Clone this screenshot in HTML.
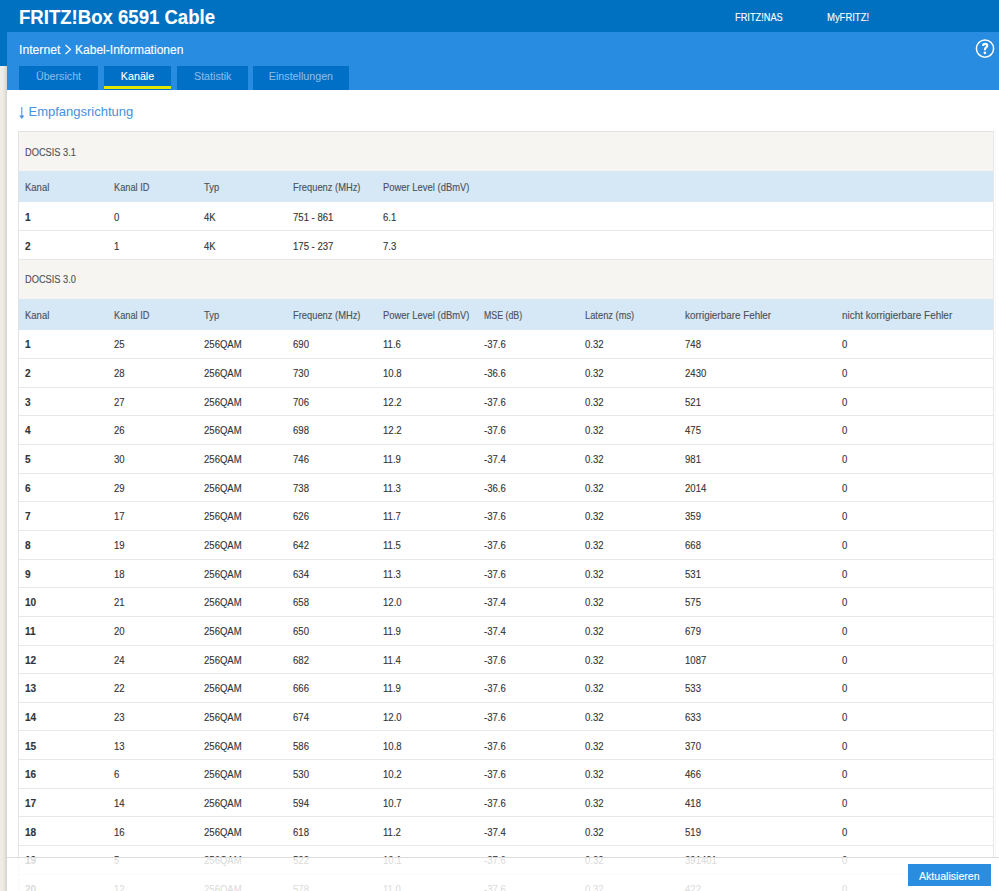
<!DOCTYPE html>
<html><head><meta charset="utf-8"><style>
html,body{margin:0;padding:0;}
body{width:999px;height:891px;overflow:hidden;position:relative;background:#efebe4;font-family:"Liberation Sans", sans-serif;}
body>div{position:absolute;}
.t{white-space:nowrap;transform-origin:0 0;-webkit-text-stroke:0.12px currentColor;}
</style></head><body>
<div style="left:0px;top:66px;width:7px;height:825px;background:linear-gradient(to right,#f0ede6 0px,#f0ede6 2px,#edeae3 3px,#e9e6df 4px,#e3e0d9 5px,#dad8d2 6px,#d6d4cf 7px);"></div>
<div style="left:0px;top:0px;width:999px;height:66px;background:#0070c0;"></div>
<div style="left:7px;top:32px;width:992px;height:58px;background:#288ce1;"></div>
<div style="left:7px;top:90px;width:992px;height:801px;background:#fff;"></div>
<div class="t" style="left:19px;top:5.95px;font-size:21px;line-height:21px;color:#fff;font-weight:bold;transform:scaleX(0.884);">FRITZ!Box 6591 Cable</div>
<div class="t" style="left:734.5px;top:11.65px;font-size:11px;line-height:11px;color:#fff;font-weight:normal;transform:scaleX(0.84);">FRITZ!NAS</div>
<div class="t" style="left:826.5px;top:11.65px;font-size:11px;line-height:11px;color:#fff;font-weight:normal;transform:scaleX(0.86);">MyFRITZ!</div>
<div class="t" style="left:19px;top:43.05px;font-size:13px;line-height:13px;color:#fff;font-weight:normal;transform:scaleX(0.938);">Internet</div>
<div class="t" style="left:75px;top:43.05px;font-size:13px;line-height:13px;color:#fff;font-weight:normal;transform:scaleX(0.926);">Kabel-Informationen</div>
<svg style="position:absolute;left:64px;top:44px" width="9" height="12" viewBox="0 0 9 12"><path d="M1.5 1 L6.5 5.5 L1.5 10" fill="none" stroke="#fff" stroke-width="1.2"/></svg>
<svg style="position:absolute;left:974px;top:38px" width="22" height="22" viewBox="0 0 22 22"><circle cx="11" cy="10.55" r="8.6" fill="none" stroke="#fff" stroke-width="1.5"/><path d="M9.1 8.1 C9.1 6.6 10.0 5.9 11.2 5.9 C12.4 5.9 13.3 6.7 13.3 7.8 C13.3 9.3 11.0 9.6 11.0 11.3 L11.0 12.2" fill="none" stroke="#fff" stroke-width="2.1"/><circle cx="10.9" cy="14.8" r="1.35" fill="#fff"/></svg>
<div style="left:19px;top:66px;width:79px;height:24px;background:#006fc6;"></div>
<div class="t" style="left:19px;top:71.15px;width:79.00px;text-align:center;font-size:11.5px;line-height:11px;color:#86bbe8;transform:scaleX(0.93);transform-origin:50% 0">Übersicht</div>
<div style="left:104px;top:66px;width:67px;height:24px;background:#006fc6;"></div>
<div style="left:104px;top:86px;width:67px;height:3px;background:#e5e600;"></div>
<div class="t" style="left:104px;top:71.15px;width:67.00px;text-align:center;font-size:11.5px;line-height:11px;color:#fff;transform:scaleX(0.93);transform-origin:50% 0">Kanäle</div>
<div style="left:176.5px;top:66px;width:71.5px;height:24px;background:#006fc6;"></div>
<div class="t" style="left:176.5px;top:71.15px;width:71.50px;text-align:center;font-size:11.5px;line-height:11px;color:#86bbe8;transform:scaleX(0.93);transform-origin:50% 0">Statistik</div>
<div style="left:253.4px;top:66px;width:95.9px;height:24px;background:#006fc6;"></div>
<div class="t" style="left:253.4px;top:71.15px;width:95.90px;text-align:center;font-size:11.5px;line-height:11px;color:#86bbe8;transform:scaleX(0.93);transform-origin:50% 0">Einstellungen</div>
<svg style="position:absolute;left:16px;top:104px" width="12" height="17" viewBox="16 104 12 17"><rect x="21.3" y="107" width="1.05" height="9.5" fill="#4a92e1"/><path d="M19.2 115.4 L24.4 115.4 L21.8 119 Z" fill="#4a92e1"/></svg>
<div class="t" style="left:28.5px;top:105.05px;font-size:13px;line-height:13px;color:#4a92e1;font-weight:normal;transform:scaleX(1.0);-webkit-text-stroke:0.05px currentColor;">Empfangsrichtung</div>
<div style="left:18px;top:132px;width:975px;height:39px;background:#f6f5f2;"></div>
<div class="t" style="left:24.6px;top:147.27px;font-size:10.5px;line-height:10.5px;color:#4c5157;font-weight:normal;transform:scaleX(0.882);">DOCSIS 3.1</div>
<div style="left:18px;top:171px;width:975px;height:31px;background:#d6e7f5;"></div>
<div class="t" style="left:24.6px;top:182.07px;font-size:10.5px;line-height:10.5px;color:#4c5157;font-weight:normal;transform:scaleX(0.905);">Kanal</div>
<div class="t" style="left:114.4px;top:182.07px;font-size:10.5px;line-height:10.5px;color:#4c5157;font-weight:normal;transform:scaleX(0.878);">Kanal ID</div>
<div class="t" style="left:203.6px;top:182.07px;font-size:10.5px;line-height:10.5px;color:#4c5157;font-weight:normal;transform:scaleX(0.9);">Typ</div>
<div class="t" style="left:293.3px;top:182.07px;font-size:10.5px;line-height:10.5px;color:#4c5157;font-weight:normal;transform:scaleX(0.889);">Frequenz (MHz)</div>
<div class="t" style="left:383px;top:182.07px;font-size:10.5px;line-height:10.5px;color:#4c5157;font-weight:normal;transform:scaleX(0.898);">Power Level (dBmV)</div>
<div style="left:18px;top:230px;width:975px;height:1px;background:#e8e8e8;"></div>
<div class="t" style="left:24.6px;top:211.97px;font-size:10.5px;line-height:10.5px;color:#343434;font-weight:bold;transform:scaleX(0.96);">1</div>
<div class="t" style="left:114.4px;top:211.97px;font-size:10.5px;line-height:10.5px;color:#343434;font-weight:normal;transform:scaleX(0.91);">0</div>
<div class="t" style="left:203.6px;top:211.97px;font-size:10.5px;line-height:10.5px;color:#343434;font-weight:normal;transform:scaleX(0.9);">4K</div>
<div class="t" style="left:293.3px;top:211.97px;font-size:10.5px;line-height:10.5px;color:#343434;font-weight:normal;transform:scaleX(0.91);">751 - 861</div>
<div class="t" style="left:383px;top:211.97px;font-size:10.5px;line-height:10.5px;color:#343434;font-weight:normal;transform:scaleX(0.91);">6.1</div>
<div style="left:18px;top:259px;width:975px;height:1px;background:#e8e8e8;"></div>
<div class="t" style="left:24.6px;top:240.62px;font-size:10.5px;line-height:10.5px;color:#343434;font-weight:bold;transform:scaleX(0.96);">2</div>
<div class="t" style="left:114.4px;top:240.62px;font-size:10.5px;line-height:10.5px;color:#343434;font-weight:normal;transform:scaleX(0.91);">1</div>
<div class="t" style="left:203.6px;top:240.62px;font-size:10.5px;line-height:10.5px;color:#343434;font-weight:normal;transform:scaleX(0.9);">4K</div>
<div class="t" style="left:293.3px;top:240.62px;font-size:10.5px;line-height:10.5px;color:#343434;font-weight:normal;transform:scaleX(0.91);">175 - 237</div>
<div class="t" style="left:383px;top:240.62px;font-size:10.5px;line-height:10.5px;color:#343434;font-weight:normal;transform:scaleX(0.91);">7.3</div>
<div style="left:18px;top:260px;width:975px;height:39px;background:#f6f5f2;"></div>
<div class="t" style="left:24.6px;top:274.47px;font-size:10.5px;line-height:10.5px;color:#4c5157;font-weight:normal;transform:scaleX(0.882);">DOCSIS 3.0</div>
<div style="left:18px;top:299px;width:975px;height:31px;background:#d6e7f5;"></div>
<div class="t" style="left:24.6px;top:309.88px;font-size:10.5px;line-height:10.5px;color:#4c5157;font-weight:normal;transform:scaleX(0.905);">Kanal</div>
<div class="t" style="left:114.4px;top:309.88px;font-size:10.5px;line-height:10.5px;color:#4c5157;font-weight:normal;transform:scaleX(0.878);">Kanal ID</div>
<div class="t" style="left:203.6px;top:309.88px;font-size:10.5px;line-height:10.5px;color:#4c5157;font-weight:normal;transform:scaleX(0.9);">Typ</div>
<div class="t" style="left:293.3px;top:309.88px;font-size:10.5px;line-height:10.5px;color:#4c5157;font-weight:normal;transform:scaleX(0.889);">Frequenz (MHz)</div>
<div class="t" style="left:383px;top:309.88px;font-size:10.5px;line-height:10.5px;color:#4c5157;font-weight:normal;transform:scaleX(0.898);">Power Level (dBmV)</div>
<div class="t" style="left:483.8px;top:309.88px;font-size:10.5px;line-height:10.5px;color:#4c5157;font-weight:normal;transform:scaleX(0.838);">MSE (dB)</div>
<div class="t" style="left:584.8px;top:309.88px;font-size:10.5px;line-height:10.5px;color:#4c5157;font-weight:normal;transform:scaleX(0.888);">Latenz (ms)</div>
<div class="t" style="left:685.3px;top:309.88px;font-size:10.5px;line-height:10.5px;color:#4c5157;font-weight:normal;transform:scaleX(0.94);">korrigierbare Fehler</div>
<div class="t" style="left:842.3px;top:309.88px;font-size:10.5px;line-height:10.5px;color:#4c5157;font-weight:normal;transform:scaleX(0.944);">nicht korrigierbare Fehler</div>
<div style="left:18px;top:358px;width:975px;height:1px;background:#e8e8e8;"></div>
<div class="t" style="left:24.6px;top:339.47px;font-size:10.5px;line-height:10.5px;color:#343434;font-weight:bold;transform:scaleX(0.96);">1</div>
<div class="t" style="left:114.4px;top:339.47px;font-size:10.5px;line-height:10.5px;color:#343434;font-weight:normal;transform:scaleX(0.91);">25</div>
<div class="t" style="left:203.6px;top:339.47px;font-size:10.5px;line-height:10.5px;color:#343434;font-weight:normal;transform:scaleX(0.91);">256QAM</div>
<div class="t" style="left:293.3px;top:339.47px;font-size:10.5px;line-height:10.5px;color:#343434;font-weight:normal;transform:scaleX(0.91);">690</div>
<div class="t" style="left:383px;top:339.47px;font-size:10.5px;line-height:10.5px;color:#343434;font-weight:normal;transform:scaleX(0.91);">11.6</div>
<div class="t" style="left:483.8px;top:339.47px;font-size:10.5px;line-height:10.5px;color:#343434;font-weight:normal;transform:scaleX(0.91);">-37.6</div>
<div class="t" style="left:584.8px;top:339.47px;font-size:10.5px;line-height:10.5px;color:#343434;font-weight:normal;transform:scaleX(0.91);">0.32</div>
<div class="t" style="left:685.3px;top:339.47px;font-size:10.5px;line-height:10.5px;color:#343434;font-weight:normal;transform:scaleX(0.91);">748</div>
<div class="t" style="left:842.3px;top:339.47px;font-size:10.5px;line-height:10.5px;color:#343434;font-weight:normal;transform:scaleX(0.91);">0</div>
<div style="left:18px;top:387px;width:975px;height:1px;background:#e8e8e8;"></div>
<div class="t" style="left:24.6px;top:368.12px;font-size:10.5px;line-height:10.5px;color:#343434;font-weight:bold;transform:scaleX(0.96);">2</div>
<div class="t" style="left:114.4px;top:368.12px;font-size:10.5px;line-height:10.5px;color:#343434;font-weight:normal;transform:scaleX(0.91);">28</div>
<div class="t" style="left:203.6px;top:368.12px;font-size:10.5px;line-height:10.5px;color:#343434;font-weight:normal;transform:scaleX(0.91);">256QAM</div>
<div class="t" style="left:293.3px;top:368.12px;font-size:10.5px;line-height:10.5px;color:#343434;font-weight:normal;transform:scaleX(0.91);">730</div>
<div class="t" style="left:383px;top:368.12px;font-size:10.5px;line-height:10.5px;color:#343434;font-weight:normal;transform:scaleX(0.91);">10.8</div>
<div class="t" style="left:483.8px;top:368.12px;font-size:10.5px;line-height:10.5px;color:#343434;font-weight:normal;transform:scaleX(0.91);">-36.6</div>
<div class="t" style="left:584.8px;top:368.12px;font-size:10.5px;line-height:10.5px;color:#343434;font-weight:normal;transform:scaleX(0.91);">0.32</div>
<div class="t" style="left:685.3px;top:368.12px;font-size:10.5px;line-height:10.5px;color:#343434;font-weight:normal;transform:scaleX(0.91);">2430</div>
<div class="t" style="left:842.3px;top:368.12px;font-size:10.5px;line-height:10.5px;color:#343434;font-weight:normal;transform:scaleX(0.91);">0</div>
<div style="left:18px;top:415px;width:975px;height:1px;background:#e8e8e8;"></div>
<div class="t" style="left:24.6px;top:396.77px;font-size:10.5px;line-height:10.5px;color:#343434;font-weight:bold;transform:scaleX(0.96);">3</div>
<div class="t" style="left:114.4px;top:396.77px;font-size:10.5px;line-height:10.5px;color:#343434;font-weight:normal;transform:scaleX(0.91);">27</div>
<div class="t" style="left:203.6px;top:396.77px;font-size:10.5px;line-height:10.5px;color:#343434;font-weight:normal;transform:scaleX(0.91);">256QAM</div>
<div class="t" style="left:293.3px;top:396.77px;font-size:10.5px;line-height:10.5px;color:#343434;font-weight:normal;transform:scaleX(0.91);">706</div>
<div class="t" style="left:383px;top:396.77px;font-size:10.5px;line-height:10.5px;color:#343434;font-weight:normal;transform:scaleX(0.91);">12.2</div>
<div class="t" style="left:483.8px;top:396.77px;font-size:10.5px;line-height:10.5px;color:#343434;font-weight:normal;transform:scaleX(0.91);">-37.6</div>
<div class="t" style="left:584.8px;top:396.77px;font-size:10.5px;line-height:10.5px;color:#343434;font-weight:normal;transform:scaleX(0.91);">0.32</div>
<div class="t" style="left:685.3px;top:396.77px;font-size:10.5px;line-height:10.5px;color:#343434;font-weight:normal;transform:scaleX(0.91);">521</div>
<div class="t" style="left:842.3px;top:396.77px;font-size:10.5px;line-height:10.5px;color:#343434;font-weight:normal;transform:scaleX(0.91);">0</div>
<div style="left:18px;top:444px;width:975px;height:1px;background:#e8e8e8;"></div>
<div class="t" style="left:24.6px;top:425.42px;font-size:10.5px;line-height:10.5px;color:#343434;font-weight:bold;transform:scaleX(0.96);">4</div>
<div class="t" style="left:114.4px;top:425.42px;font-size:10.5px;line-height:10.5px;color:#343434;font-weight:normal;transform:scaleX(0.91);">26</div>
<div class="t" style="left:203.6px;top:425.42px;font-size:10.5px;line-height:10.5px;color:#343434;font-weight:normal;transform:scaleX(0.91);">256QAM</div>
<div class="t" style="left:293.3px;top:425.42px;font-size:10.5px;line-height:10.5px;color:#343434;font-weight:normal;transform:scaleX(0.91);">698</div>
<div class="t" style="left:383px;top:425.42px;font-size:10.5px;line-height:10.5px;color:#343434;font-weight:normal;transform:scaleX(0.91);">12.2</div>
<div class="t" style="left:483.8px;top:425.42px;font-size:10.5px;line-height:10.5px;color:#343434;font-weight:normal;transform:scaleX(0.91);">-37.6</div>
<div class="t" style="left:584.8px;top:425.42px;font-size:10.5px;line-height:10.5px;color:#343434;font-weight:normal;transform:scaleX(0.91);">0.32</div>
<div class="t" style="left:685.3px;top:425.42px;font-size:10.5px;line-height:10.5px;color:#343434;font-weight:normal;transform:scaleX(0.91);">475</div>
<div class="t" style="left:842.3px;top:425.42px;font-size:10.5px;line-height:10.5px;color:#343434;font-weight:normal;transform:scaleX(0.91);">0</div>
<div style="left:18px;top:473px;width:975px;height:1px;background:#e8e8e8;"></div>
<div class="t" style="left:24.6px;top:454.07px;font-size:10.5px;line-height:10.5px;color:#343434;font-weight:bold;transform:scaleX(0.96);">5</div>
<div class="t" style="left:114.4px;top:454.07px;font-size:10.5px;line-height:10.5px;color:#343434;font-weight:normal;transform:scaleX(0.91);">30</div>
<div class="t" style="left:203.6px;top:454.07px;font-size:10.5px;line-height:10.5px;color:#343434;font-weight:normal;transform:scaleX(0.91);">256QAM</div>
<div class="t" style="left:293.3px;top:454.07px;font-size:10.5px;line-height:10.5px;color:#343434;font-weight:normal;transform:scaleX(0.91);">746</div>
<div class="t" style="left:383px;top:454.07px;font-size:10.5px;line-height:10.5px;color:#343434;font-weight:normal;transform:scaleX(0.91);">11.9</div>
<div class="t" style="left:483.8px;top:454.07px;font-size:10.5px;line-height:10.5px;color:#343434;font-weight:normal;transform:scaleX(0.91);">-37.4</div>
<div class="t" style="left:584.8px;top:454.07px;font-size:10.5px;line-height:10.5px;color:#343434;font-weight:normal;transform:scaleX(0.91);">0.32</div>
<div class="t" style="left:685.3px;top:454.07px;font-size:10.5px;line-height:10.5px;color:#343434;font-weight:normal;transform:scaleX(0.91);">981</div>
<div class="t" style="left:842.3px;top:454.07px;font-size:10.5px;line-height:10.5px;color:#343434;font-weight:normal;transform:scaleX(0.91);">0</div>
<div style="left:18px;top:501px;width:975px;height:1px;background:#e8e8e8;"></div>
<div class="t" style="left:24.6px;top:482.72px;font-size:10.5px;line-height:10.5px;color:#343434;font-weight:bold;transform:scaleX(0.96);">6</div>
<div class="t" style="left:114.4px;top:482.72px;font-size:10.5px;line-height:10.5px;color:#343434;font-weight:normal;transform:scaleX(0.91);">29</div>
<div class="t" style="left:203.6px;top:482.72px;font-size:10.5px;line-height:10.5px;color:#343434;font-weight:normal;transform:scaleX(0.91);">256QAM</div>
<div class="t" style="left:293.3px;top:482.72px;font-size:10.5px;line-height:10.5px;color:#343434;font-weight:normal;transform:scaleX(0.91);">738</div>
<div class="t" style="left:383px;top:482.72px;font-size:10.5px;line-height:10.5px;color:#343434;font-weight:normal;transform:scaleX(0.91);">11.3</div>
<div class="t" style="left:483.8px;top:482.72px;font-size:10.5px;line-height:10.5px;color:#343434;font-weight:normal;transform:scaleX(0.91);">-36.6</div>
<div class="t" style="left:584.8px;top:482.72px;font-size:10.5px;line-height:10.5px;color:#343434;font-weight:normal;transform:scaleX(0.91);">0.32</div>
<div class="t" style="left:685.3px;top:482.72px;font-size:10.5px;line-height:10.5px;color:#343434;font-weight:normal;transform:scaleX(0.91);">2014</div>
<div class="t" style="left:842.3px;top:482.72px;font-size:10.5px;line-height:10.5px;color:#343434;font-weight:normal;transform:scaleX(0.91);">0</div>
<div style="left:18px;top:530px;width:975px;height:1px;background:#e8e8e8;"></div>
<div class="t" style="left:24.6px;top:511.37px;font-size:10.5px;line-height:10.5px;color:#343434;font-weight:bold;transform:scaleX(0.96);">7</div>
<div class="t" style="left:114.4px;top:511.37px;font-size:10.5px;line-height:10.5px;color:#343434;font-weight:normal;transform:scaleX(0.91);">17</div>
<div class="t" style="left:203.6px;top:511.37px;font-size:10.5px;line-height:10.5px;color:#343434;font-weight:normal;transform:scaleX(0.91);">256QAM</div>
<div class="t" style="left:293.3px;top:511.37px;font-size:10.5px;line-height:10.5px;color:#343434;font-weight:normal;transform:scaleX(0.91);">626</div>
<div class="t" style="left:383px;top:511.37px;font-size:10.5px;line-height:10.5px;color:#343434;font-weight:normal;transform:scaleX(0.91);">11.7</div>
<div class="t" style="left:483.8px;top:511.37px;font-size:10.5px;line-height:10.5px;color:#343434;font-weight:normal;transform:scaleX(0.91);">-37.6</div>
<div class="t" style="left:584.8px;top:511.37px;font-size:10.5px;line-height:10.5px;color:#343434;font-weight:normal;transform:scaleX(0.91);">0.32</div>
<div class="t" style="left:685.3px;top:511.37px;font-size:10.5px;line-height:10.5px;color:#343434;font-weight:normal;transform:scaleX(0.91);">359</div>
<div class="t" style="left:842.3px;top:511.37px;font-size:10.5px;line-height:10.5px;color:#343434;font-weight:normal;transform:scaleX(0.91);">0</div>
<div style="left:18px;top:559px;width:975px;height:1px;background:#e8e8e8;"></div>
<div class="t" style="left:24.6px;top:540.02px;font-size:10.5px;line-height:10.5px;color:#343434;font-weight:bold;transform:scaleX(0.96);">8</div>
<div class="t" style="left:114.4px;top:540.02px;font-size:10.5px;line-height:10.5px;color:#343434;font-weight:normal;transform:scaleX(0.91);">19</div>
<div class="t" style="left:203.6px;top:540.02px;font-size:10.5px;line-height:10.5px;color:#343434;font-weight:normal;transform:scaleX(0.91);">256QAM</div>
<div class="t" style="left:293.3px;top:540.02px;font-size:10.5px;line-height:10.5px;color:#343434;font-weight:normal;transform:scaleX(0.91);">642</div>
<div class="t" style="left:383px;top:540.02px;font-size:10.5px;line-height:10.5px;color:#343434;font-weight:normal;transform:scaleX(0.91);">11.5</div>
<div class="t" style="left:483.8px;top:540.02px;font-size:10.5px;line-height:10.5px;color:#343434;font-weight:normal;transform:scaleX(0.91);">-37.6</div>
<div class="t" style="left:584.8px;top:540.02px;font-size:10.5px;line-height:10.5px;color:#343434;font-weight:normal;transform:scaleX(0.91);">0.32</div>
<div class="t" style="left:685.3px;top:540.02px;font-size:10.5px;line-height:10.5px;color:#343434;font-weight:normal;transform:scaleX(0.91);">668</div>
<div class="t" style="left:842.3px;top:540.02px;font-size:10.5px;line-height:10.5px;color:#343434;font-weight:normal;transform:scaleX(0.91);">0</div>
<div style="left:18px;top:587px;width:975px;height:1px;background:#e8e8e8;"></div>
<div class="t" style="left:24.6px;top:568.68px;font-size:10.5px;line-height:10.5px;color:#343434;font-weight:bold;transform:scaleX(0.96);">9</div>
<div class="t" style="left:114.4px;top:568.68px;font-size:10.5px;line-height:10.5px;color:#343434;font-weight:normal;transform:scaleX(0.91);">18</div>
<div class="t" style="left:203.6px;top:568.68px;font-size:10.5px;line-height:10.5px;color:#343434;font-weight:normal;transform:scaleX(0.91);">256QAM</div>
<div class="t" style="left:293.3px;top:568.68px;font-size:10.5px;line-height:10.5px;color:#343434;font-weight:normal;transform:scaleX(0.91);">634</div>
<div class="t" style="left:383px;top:568.68px;font-size:10.5px;line-height:10.5px;color:#343434;font-weight:normal;transform:scaleX(0.91);">11.3</div>
<div class="t" style="left:483.8px;top:568.68px;font-size:10.5px;line-height:10.5px;color:#343434;font-weight:normal;transform:scaleX(0.91);">-37.6</div>
<div class="t" style="left:584.8px;top:568.68px;font-size:10.5px;line-height:10.5px;color:#343434;font-weight:normal;transform:scaleX(0.91);">0.32</div>
<div class="t" style="left:685.3px;top:568.68px;font-size:10.5px;line-height:10.5px;color:#343434;font-weight:normal;transform:scaleX(0.91);">531</div>
<div class="t" style="left:842.3px;top:568.68px;font-size:10.5px;line-height:10.5px;color:#343434;font-weight:normal;transform:scaleX(0.91);">0</div>
<div style="left:18px;top:616px;width:975px;height:1px;background:#e8e8e8;"></div>
<div class="t" style="left:24.6px;top:597.32px;font-size:10.5px;line-height:10.5px;color:#343434;font-weight:bold;transform:scaleX(0.96);">10</div>
<div class="t" style="left:114.4px;top:597.32px;font-size:10.5px;line-height:10.5px;color:#343434;font-weight:normal;transform:scaleX(0.91);">21</div>
<div class="t" style="left:203.6px;top:597.32px;font-size:10.5px;line-height:10.5px;color:#343434;font-weight:normal;transform:scaleX(0.91);">256QAM</div>
<div class="t" style="left:293.3px;top:597.32px;font-size:10.5px;line-height:10.5px;color:#343434;font-weight:normal;transform:scaleX(0.91);">658</div>
<div class="t" style="left:383px;top:597.32px;font-size:10.5px;line-height:10.5px;color:#343434;font-weight:normal;transform:scaleX(0.91);">12.0</div>
<div class="t" style="left:483.8px;top:597.32px;font-size:10.5px;line-height:10.5px;color:#343434;font-weight:normal;transform:scaleX(0.91);">-37.4</div>
<div class="t" style="left:584.8px;top:597.32px;font-size:10.5px;line-height:10.5px;color:#343434;font-weight:normal;transform:scaleX(0.91);">0.32</div>
<div class="t" style="left:685.3px;top:597.32px;font-size:10.5px;line-height:10.5px;color:#343434;font-weight:normal;transform:scaleX(0.91);">575</div>
<div class="t" style="left:842.3px;top:597.32px;font-size:10.5px;line-height:10.5px;color:#343434;font-weight:normal;transform:scaleX(0.91);">0</div>
<div style="left:18px;top:645px;width:975px;height:1px;background:#e8e8e8;"></div>
<div class="t" style="left:24.6px;top:625.98px;font-size:10.5px;line-height:10.5px;color:#343434;font-weight:bold;transform:scaleX(0.96);">11</div>
<div class="t" style="left:114.4px;top:625.98px;font-size:10.5px;line-height:10.5px;color:#343434;font-weight:normal;transform:scaleX(0.91);">20</div>
<div class="t" style="left:203.6px;top:625.98px;font-size:10.5px;line-height:10.5px;color:#343434;font-weight:normal;transform:scaleX(0.91);">256QAM</div>
<div class="t" style="left:293.3px;top:625.98px;font-size:10.5px;line-height:10.5px;color:#343434;font-weight:normal;transform:scaleX(0.91);">650</div>
<div class="t" style="left:383px;top:625.98px;font-size:10.5px;line-height:10.5px;color:#343434;font-weight:normal;transform:scaleX(0.91);">11.9</div>
<div class="t" style="left:483.8px;top:625.98px;font-size:10.5px;line-height:10.5px;color:#343434;font-weight:normal;transform:scaleX(0.91);">-37.4</div>
<div class="t" style="left:584.8px;top:625.98px;font-size:10.5px;line-height:10.5px;color:#343434;font-weight:normal;transform:scaleX(0.91);">0.32</div>
<div class="t" style="left:685.3px;top:625.98px;font-size:10.5px;line-height:10.5px;color:#343434;font-weight:normal;transform:scaleX(0.91);">679</div>
<div class="t" style="left:842.3px;top:625.98px;font-size:10.5px;line-height:10.5px;color:#343434;font-weight:normal;transform:scaleX(0.91);">0</div>
<div style="left:18px;top:673px;width:975px;height:1px;background:#e8e8e8;"></div>
<div class="t" style="left:24.6px;top:654.62px;font-size:10.5px;line-height:10.5px;color:#343434;font-weight:bold;transform:scaleX(0.96);">12</div>
<div class="t" style="left:114.4px;top:654.62px;font-size:10.5px;line-height:10.5px;color:#343434;font-weight:normal;transform:scaleX(0.91);">24</div>
<div class="t" style="left:203.6px;top:654.62px;font-size:10.5px;line-height:10.5px;color:#343434;font-weight:normal;transform:scaleX(0.91);">256QAM</div>
<div class="t" style="left:293.3px;top:654.62px;font-size:10.5px;line-height:10.5px;color:#343434;font-weight:normal;transform:scaleX(0.91);">682</div>
<div class="t" style="left:383px;top:654.62px;font-size:10.5px;line-height:10.5px;color:#343434;font-weight:normal;transform:scaleX(0.91);">11.4</div>
<div class="t" style="left:483.8px;top:654.62px;font-size:10.5px;line-height:10.5px;color:#343434;font-weight:normal;transform:scaleX(0.91);">-37.6</div>
<div class="t" style="left:584.8px;top:654.62px;font-size:10.5px;line-height:10.5px;color:#343434;font-weight:normal;transform:scaleX(0.91);">0.32</div>
<div class="t" style="left:685.3px;top:654.62px;font-size:10.5px;line-height:10.5px;color:#343434;font-weight:normal;transform:scaleX(0.91);">1087</div>
<div class="t" style="left:842.3px;top:654.62px;font-size:10.5px;line-height:10.5px;color:#343434;font-weight:normal;transform:scaleX(0.91);">0</div>
<div style="left:18px;top:702px;width:975px;height:1px;background:#e8e8e8;"></div>
<div class="t" style="left:24.6px;top:683.27px;font-size:10.5px;line-height:10.5px;color:#343434;font-weight:bold;transform:scaleX(0.96);">13</div>
<div class="t" style="left:114.4px;top:683.27px;font-size:10.5px;line-height:10.5px;color:#343434;font-weight:normal;transform:scaleX(0.91);">22</div>
<div class="t" style="left:203.6px;top:683.27px;font-size:10.5px;line-height:10.5px;color:#343434;font-weight:normal;transform:scaleX(0.91);">256QAM</div>
<div class="t" style="left:293.3px;top:683.27px;font-size:10.5px;line-height:10.5px;color:#343434;font-weight:normal;transform:scaleX(0.91);">666</div>
<div class="t" style="left:383px;top:683.27px;font-size:10.5px;line-height:10.5px;color:#343434;font-weight:normal;transform:scaleX(0.91);">11.9</div>
<div class="t" style="left:483.8px;top:683.27px;font-size:10.5px;line-height:10.5px;color:#343434;font-weight:normal;transform:scaleX(0.91);">-37.6</div>
<div class="t" style="left:584.8px;top:683.27px;font-size:10.5px;line-height:10.5px;color:#343434;font-weight:normal;transform:scaleX(0.91);">0.32</div>
<div class="t" style="left:685.3px;top:683.27px;font-size:10.5px;line-height:10.5px;color:#343434;font-weight:normal;transform:scaleX(0.91);">533</div>
<div class="t" style="left:842.3px;top:683.27px;font-size:10.5px;line-height:10.5px;color:#343434;font-weight:normal;transform:scaleX(0.91);">0</div>
<div style="left:18px;top:730px;width:975px;height:1px;background:#e8e8e8;"></div>
<div class="t" style="left:24.6px;top:711.93px;font-size:10.5px;line-height:10.5px;color:#343434;font-weight:bold;transform:scaleX(0.96);">14</div>
<div class="t" style="left:114.4px;top:711.93px;font-size:10.5px;line-height:10.5px;color:#343434;font-weight:normal;transform:scaleX(0.91);">23</div>
<div class="t" style="left:203.6px;top:711.93px;font-size:10.5px;line-height:10.5px;color:#343434;font-weight:normal;transform:scaleX(0.91);">256QAM</div>
<div class="t" style="left:293.3px;top:711.93px;font-size:10.5px;line-height:10.5px;color:#343434;font-weight:normal;transform:scaleX(0.91);">674</div>
<div class="t" style="left:383px;top:711.93px;font-size:10.5px;line-height:10.5px;color:#343434;font-weight:normal;transform:scaleX(0.91);">12.0</div>
<div class="t" style="left:483.8px;top:711.93px;font-size:10.5px;line-height:10.5px;color:#343434;font-weight:normal;transform:scaleX(0.91);">-37.6</div>
<div class="t" style="left:584.8px;top:711.93px;font-size:10.5px;line-height:10.5px;color:#343434;font-weight:normal;transform:scaleX(0.91);">0.32</div>
<div class="t" style="left:685.3px;top:711.93px;font-size:10.5px;line-height:10.5px;color:#343434;font-weight:normal;transform:scaleX(0.91);">633</div>
<div class="t" style="left:842.3px;top:711.93px;font-size:10.5px;line-height:10.5px;color:#343434;font-weight:normal;transform:scaleX(0.91);">0</div>
<div style="left:18px;top:759px;width:975px;height:1px;background:#e8e8e8;"></div>
<div class="t" style="left:24.6px;top:740.57px;font-size:10.5px;line-height:10.5px;color:#343434;font-weight:bold;transform:scaleX(0.96);">15</div>
<div class="t" style="left:114.4px;top:740.57px;font-size:10.5px;line-height:10.5px;color:#343434;font-weight:normal;transform:scaleX(0.91);">13</div>
<div class="t" style="left:203.6px;top:740.57px;font-size:10.5px;line-height:10.5px;color:#343434;font-weight:normal;transform:scaleX(0.91);">256QAM</div>
<div class="t" style="left:293.3px;top:740.57px;font-size:10.5px;line-height:10.5px;color:#343434;font-weight:normal;transform:scaleX(0.91);">586</div>
<div class="t" style="left:383px;top:740.57px;font-size:10.5px;line-height:10.5px;color:#343434;font-weight:normal;transform:scaleX(0.91);">10.8</div>
<div class="t" style="left:483.8px;top:740.57px;font-size:10.5px;line-height:10.5px;color:#343434;font-weight:normal;transform:scaleX(0.91);">-37.6</div>
<div class="t" style="left:584.8px;top:740.57px;font-size:10.5px;line-height:10.5px;color:#343434;font-weight:normal;transform:scaleX(0.91);">0.32</div>
<div class="t" style="left:685.3px;top:740.57px;font-size:10.5px;line-height:10.5px;color:#343434;font-weight:normal;transform:scaleX(0.91);">370</div>
<div class="t" style="left:842.3px;top:740.57px;font-size:10.5px;line-height:10.5px;color:#343434;font-weight:normal;transform:scaleX(0.91);">0</div>
<div style="left:18px;top:788px;width:975px;height:1px;background:#e8e8e8;"></div>
<div class="t" style="left:24.6px;top:769.23px;font-size:10.5px;line-height:10.5px;color:#343434;font-weight:bold;transform:scaleX(0.96);">16</div>
<div class="t" style="left:114.4px;top:769.23px;font-size:10.5px;line-height:10.5px;color:#343434;font-weight:normal;transform:scaleX(0.91);">6</div>
<div class="t" style="left:203.6px;top:769.23px;font-size:10.5px;line-height:10.5px;color:#343434;font-weight:normal;transform:scaleX(0.91);">256QAM</div>
<div class="t" style="left:293.3px;top:769.23px;font-size:10.5px;line-height:10.5px;color:#343434;font-weight:normal;transform:scaleX(0.91);">530</div>
<div class="t" style="left:383px;top:769.23px;font-size:10.5px;line-height:10.5px;color:#343434;font-weight:normal;transform:scaleX(0.91);">10.2</div>
<div class="t" style="left:483.8px;top:769.23px;font-size:10.5px;line-height:10.5px;color:#343434;font-weight:normal;transform:scaleX(0.91);">-37.6</div>
<div class="t" style="left:584.8px;top:769.23px;font-size:10.5px;line-height:10.5px;color:#343434;font-weight:normal;transform:scaleX(0.91);">0.32</div>
<div class="t" style="left:685.3px;top:769.23px;font-size:10.5px;line-height:10.5px;color:#343434;font-weight:normal;transform:scaleX(0.91);">466</div>
<div class="t" style="left:842.3px;top:769.23px;font-size:10.5px;line-height:10.5px;color:#343434;font-weight:normal;transform:scaleX(0.91);">0</div>
<div style="left:18px;top:816px;width:975px;height:1px;background:#e8e8e8;"></div>
<div class="t" style="left:24.6px;top:797.88px;font-size:10.5px;line-height:10.5px;color:#343434;font-weight:bold;transform:scaleX(0.96);">17</div>
<div class="t" style="left:114.4px;top:797.88px;font-size:10.5px;line-height:10.5px;color:#343434;font-weight:normal;transform:scaleX(0.91);">14</div>
<div class="t" style="left:203.6px;top:797.88px;font-size:10.5px;line-height:10.5px;color:#343434;font-weight:normal;transform:scaleX(0.91);">256QAM</div>
<div class="t" style="left:293.3px;top:797.88px;font-size:10.5px;line-height:10.5px;color:#343434;font-weight:normal;transform:scaleX(0.91);">594</div>
<div class="t" style="left:383px;top:797.88px;font-size:10.5px;line-height:10.5px;color:#343434;font-weight:normal;transform:scaleX(0.91);">10.7</div>
<div class="t" style="left:483.8px;top:797.88px;font-size:10.5px;line-height:10.5px;color:#343434;font-weight:normal;transform:scaleX(0.91);">-37.6</div>
<div class="t" style="left:584.8px;top:797.88px;font-size:10.5px;line-height:10.5px;color:#343434;font-weight:normal;transform:scaleX(0.91);">0.32</div>
<div class="t" style="left:685.3px;top:797.88px;font-size:10.5px;line-height:10.5px;color:#343434;font-weight:normal;transform:scaleX(0.91);">418</div>
<div class="t" style="left:842.3px;top:797.88px;font-size:10.5px;line-height:10.5px;color:#343434;font-weight:normal;transform:scaleX(0.91);">0</div>
<div style="left:18px;top:845px;width:975px;height:1px;background:#e8e8e8;"></div>
<div class="t" style="left:24.6px;top:826.52px;font-size:10.5px;line-height:10.5px;color:#343434;font-weight:bold;transform:scaleX(0.96);">18</div>
<div class="t" style="left:114.4px;top:826.52px;font-size:10.5px;line-height:10.5px;color:#343434;font-weight:normal;transform:scaleX(0.91);">16</div>
<div class="t" style="left:203.6px;top:826.52px;font-size:10.5px;line-height:10.5px;color:#343434;font-weight:normal;transform:scaleX(0.91);">256QAM</div>
<div class="t" style="left:293.3px;top:826.52px;font-size:10.5px;line-height:10.5px;color:#343434;font-weight:normal;transform:scaleX(0.91);">618</div>
<div class="t" style="left:383px;top:826.52px;font-size:10.5px;line-height:10.5px;color:#343434;font-weight:normal;transform:scaleX(0.91);">11.2</div>
<div class="t" style="left:483.8px;top:826.52px;font-size:10.5px;line-height:10.5px;color:#343434;font-weight:normal;transform:scaleX(0.91);">-37.4</div>
<div class="t" style="left:584.8px;top:826.52px;font-size:10.5px;line-height:10.5px;color:#343434;font-weight:normal;transform:scaleX(0.91);">0.32</div>
<div class="t" style="left:685.3px;top:826.52px;font-size:10.5px;line-height:10.5px;color:#343434;font-weight:normal;transform:scaleX(0.91);">519</div>
<div class="t" style="left:842.3px;top:826.52px;font-size:10.5px;line-height:10.5px;color:#343434;font-weight:normal;transform:scaleX(0.91);">0</div>
<div style="left:18px;top:874px;width:975px;height:1px;background:#e8e8e8;"></div>
<div class="t" style="left:24.6px;top:855.17px;font-size:10.5px;line-height:10.5px;color:#343434;font-weight:bold;transform:scaleX(0.96);">19</div>
<div class="t" style="left:114.4px;top:855.17px;font-size:10.5px;line-height:10.5px;color:#343434;font-weight:normal;transform:scaleX(0.91);">5</div>
<div class="t" style="left:203.6px;top:855.17px;font-size:10.5px;line-height:10.5px;color:#343434;font-weight:normal;transform:scaleX(0.91);">256QAM</div>
<div class="t" style="left:293.3px;top:855.17px;font-size:10.5px;line-height:10.5px;color:#343434;font-weight:normal;transform:scaleX(0.91);">522</div>
<div class="t" style="left:383px;top:855.17px;font-size:10.5px;line-height:10.5px;color:#343434;font-weight:normal;transform:scaleX(0.91);">10.1</div>
<div class="t" style="left:483.8px;top:855.17px;font-size:10.5px;line-height:10.5px;color:#343434;font-weight:normal;transform:scaleX(0.91);">-37.6</div>
<div class="t" style="left:584.8px;top:855.17px;font-size:10.5px;line-height:10.5px;color:#343434;font-weight:normal;transform:scaleX(0.91);">0.32</div>
<div class="t" style="left:685.3px;top:855.17px;font-size:10.5px;line-height:10.5px;color:#343434;font-weight:normal;transform:scaleX(0.91);">391401</div>
<div class="t" style="left:842.3px;top:855.17px;font-size:10.5px;line-height:10.5px;color:#343434;font-weight:normal;transform:scaleX(0.91);">0</div>
<div style="left:18px;top:902px;width:975px;height:1px;background:#e8e8e8;"></div>
<div class="t" style="left:24.6px;top:883.83px;font-size:10.5px;line-height:10.5px;color:#343434;font-weight:bold;transform:scaleX(0.96);">20</div>
<div class="t" style="left:114.4px;top:883.83px;font-size:10.5px;line-height:10.5px;color:#343434;font-weight:normal;transform:scaleX(0.91);">12</div>
<div class="t" style="left:203.6px;top:883.83px;font-size:10.5px;line-height:10.5px;color:#343434;font-weight:normal;transform:scaleX(0.91);">256QAM</div>
<div class="t" style="left:293.3px;top:883.83px;font-size:10.5px;line-height:10.5px;color:#343434;font-weight:normal;transform:scaleX(0.91);">578</div>
<div class="t" style="left:383px;top:883.83px;font-size:10.5px;line-height:10.5px;color:#343434;font-weight:normal;transform:scaleX(0.91);">11.0</div>
<div class="t" style="left:483.8px;top:883.83px;font-size:10.5px;line-height:10.5px;color:#343434;font-weight:normal;transform:scaleX(0.91);">-37.6</div>
<div class="t" style="left:584.8px;top:883.83px;font-size:10.5px;line-height:10.5px;color:#343434;font-weight:normal;transform:scaleX(0.91);">0.32</div>
<div class="t" style="left:685.3px;top:883.83px;font-size:10.5px;line-height:10.5px;color:#343434;font-weight:normal;transform:scaleX(0.91);">422</div>
<div class="t" style="left:842.3px;top:883.83px;font-size:10.5px;line-height:10.5px;color:#343434;font-weight:normal;transform:scaleX(0.91);">0</div>
<div style="left:18px;top:931px;width:975px;height:1px;background:#e8e8e8;"></div>
<div class="t" style="left:24.6px;top:912.48px;font-size:10.5px;line-height:10.5px;color:#343434;font-weight:bold;transform:scaleX(0.96);">21</div>
<div class="t" style="left:114.4px;top:912.48px;font-size:10.5px;line-height:10.5px;color:#343434;font-weight:normal;transform:scaleX(0.91);">11</div>
<div class="t" style="left:203.6px;top:912.48px;font-size:10.5px;line-height:10.5px;color:#343434;font-weight:normal;transform:scaleX(0.91);">256QAM</div>
<div class="t" style="left:293.3px;top:912.48px;font-size:10.5px;line-height:10.5px;color:#343434;font-weight:normal;transform:scaleX(0.91);">570</div>
<div class="t" style="left:383px;top:912.48px;font-size:10.5px;line-height:10.5px;color:#343434;font-weight:normal;transform:scaleX(0.91);">11.0</div>
<div class="t" style="left:483.8px;top:912.48px;font-size:10.5px;line-height:10.5px;color:#343434;font-weight:normal;transform:scaleX(0.91);">-37.6</div>
<div class="t" style="left:584.8px;top:912.48px;font-size:10.5px;line-height:10.5px;color:#343434;font-weight:normal;transform:scaleX(0.91);">0.32</div>
<div class="t" style="left:685.3px;top:912.48px;font-size:10.5px;line-height:10.5px;color:#343434;font-weight:normal;transform:scaleX(0.91);">400</div>
<div class="t" style="left:842.3px;top:912.48px;font-size:10.5px;line-height:10.5px;color:#343434;font-weight:normal;transform:scaleX(0.91);">0</div>
<div style="left:18px;top:131px;width:1px;height:760px;background:#e3e3e3;"></div>
<div style="left:993px;top:131px;width:1px;height:760px;background:#e8e8e8;"></div>
<div style="left:18px;top:131px;width:976px;height:1px;background:#e3e3e3;"></div>
<div style="left:995px;top:131px;width:1px;height:760px;background:#f8f8f8;"></div>
<div style="left:7px;top:857px;width:992px;height:34px;background:rgba(255,255,255,0.82);border-top:1px solid #dcdcdc;box-sizing:border-box"></div>
<div style="left:908px;top:864px;width:83px;height:22px;background:#2a8de0;"></div>
<div class="t" style="left:919.4px;top:870.62px;font-size:11.5px;line-height:11.5px;color:#fff;font-weight:normal;transform:scaleX(0.92);">Aktualisieren</div>
</body></html>
